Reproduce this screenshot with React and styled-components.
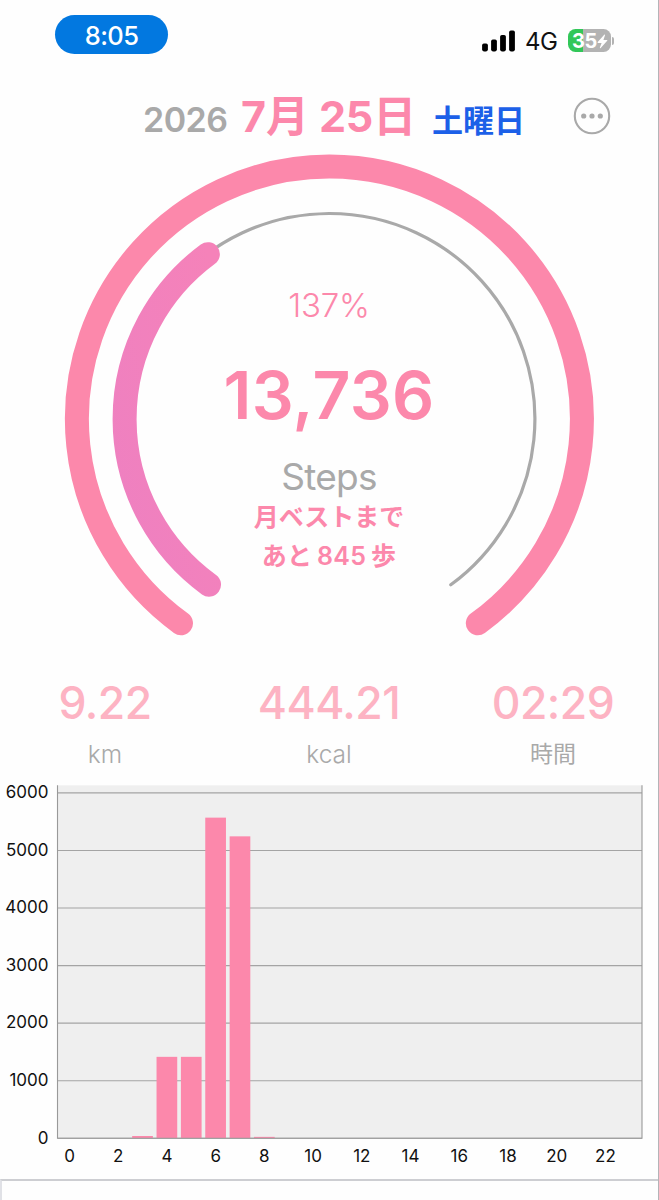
import React from "react";
import styled, { createGlobalStyle } from "styled-components";

const PINK = "#fc88ab";
const GRAY = "#a9a9a9";

const GlobalStyle = createGlobalStyle`
  * { box-sizing: border-box; }
  body { margin: 0; background: #fefefe; }
`;

const Screen = styled.div`
  width: 659px;
  height: 1200px;
  overflow: hidden;
  display: flex;
  flex-direction: column;
  background: #fefefe;
  border-right: 1px solid #b4b4b8;
  font-family: Inter, "Noto Sans CJK JP", sans-serif;
  font-feature-settings: "calt" 0;
`;

const StatusBar = styled.div`
  height: 54px;
  flex: none;
  display: flex;
  justify-content: space-between;
  align-items: flex-end;
  padding: 0 44px 0 55px;
`;

const TimePill = styled.div`
  width: 113px;
  height: 39px;
  border-radius: 20px;
  background: #0278e0;
  color: #fff;
  font-size: 25.5px;
  font-weight: 500;
  letter-spacing: -0.6px;
  line-height: 41px;
  text-align: center;
`;

const StatusIcons = styled.div`
  display: flex;
  align-items: center;
  height: 27px;
`;

const Network = styled.span`
  width: 33px;
  margin: 0 10px 0 9px;
  font-size: 24px;
  letter-spacing: -0.5px;
  line-height: 29px;
  padding-top: 1px;
  color: #111;
  white-space: nowrap;
`;

const Battery = styled.div`
  display: flex;
  align-items: center;
`;

const BatteryBody = styled.div`
  width: 43px;
  height: 23px;
  border-radius: 7.5px;
  background: linear-gradient(to right, #32c759 35%, #b3b3b3 35%);
  color: #fff;
  display: flex;
  align-items: center;
  padding-left: 4px;
  font-size: 20px;
  font-weight: 700;
  letter-spacing: -0.5px;
  line-height: 25px;
  padding-top: 1px;
`;

const BatteryTip = styled.div`
  width: 2px;
  height: 8px;
  margin-left: 1px;
  border-radius: 0 3px 3px 0;
  background: #b3b3b3;
`;

const Header = styled.header`
  height: 90px;
  flex: none;
  display: flex;
  align-items: baseline;
  padding: 35px 0 0 143px;
  font-weight: 700;
  white-space: nowrap;
`;

const Year = styled.span`
  width: 98px;
  font-size: 34px;
  font-weight: 600;
  letter-spacing: -0.5px;
  color: ${GRAY};
`;

const MonthDay = styled.span`
  width: 191px;
  font-size: 43px;
  letter-spacing: -0.1px;
  line-height: 54px;
  color: ${PINK};
`;

const Weekday = styled.span`
  width: 141px;
  font-size: 31px;
  color: #1c60e8;
`;

const MoreButton = styled.button`
  width: 38px;
  height: 38px;
  padding: 0;
  border: 0;
  background: none;
  align-self: flex-start;
  margin-top: 8px;
  svg { display: block; }
`;

const Gauge = styled.section`
  display: grid;
  height: 500px;
  flex: none;
  > * { grid-area: 1 / 1; }
`;

const GaugeText = styled.div`
  display: flex;
  flex-direction: column;
  align-items: center;
  padding-top: 138px;
  color: ${PINK};
  white-space: nowrap;
`;

const Percent = styled.div`
  font-size: 33px;
  font-weight: 300;
  letter-spacing: -0.2px;
  line-height: 46px;
`;

const StepCount = styled.div`
  margin-top: 22px;
  font-size: 66px;
  font-weight: 600;
  letter-spacing: 0.3px;
  line-height: 90px;
`;

const StepLabel = styled.div`
  margin-top: 12px;
  font-size: 37px;
  letter-spacing: -0.7px;
  line-height: 50px;
  color: ${GRAY};
`;

const BestLine = styled.div`
  font-size: 25px;
  font-weight: 600;
  line-height: 39px;
  margin-top: ${(p) => p.$offset || 0}px;
  word-spacing: -2px;
  letter-spacing: ${(p) => p.$spacing || 0}px;
`;

const Metrics = styled.section`
  display: grid;
  grid-template-columns: 210px 238px 210px;
  height: 141px;
  flex: none;
  padding-top: 33px;
`;

const Metric = styled.div`
  text-align: center;
`;

const MetricValue = styled.div`
  font-size: 44.5px;
  font-weight: 550;
  letter-spacing: -0.5px;
  line-height: 52px;
  color: #fdb3c3;
`;

const MetricUnit = styled.div`
  margin-top: 8px;
  font-size: ${(p) => p.$size || 24.5}px;
  font-weight: ${(p) => p.$weight || 350};
  line-height: 34px;
  color: ${GRAY};
`;

const ChartSvg = styled.svg`
  display: block;
  flex: none;
  overflow: visible;
  text { font-size: 17px; fill: #111; }
`;

const NextPanel = styled.div`
  flex: 1;
  border-top: 2px solid #cdced2;
  border-left: 2px solid #e0e1e6;
`;

const polar = (r, deg) => {
  const a = (deg * Math.PI) / 180;
  return [329.4 - r * Math.sin(a), 275 + r * Math.cos(a)];
};

const arc = (r, from, to) => {
  const [x1, y1] = polar(r, from);
  const [x2, y2] = polar(r, to);
  return `M${x1} ${y1}A${r} ${r} 0 ${to - from > 180 ? 1 : 0} 1 ${x2} ${y2}`;
};

const SIGNAL = [8, 12, 16.5, 21];
const HOURS = [0, 0, 0, 40, 1415, 1415, 5570, 5245, 25];
const hourX = (h) => 69.5 + h * 24.36;
const stepY = (v) => 353.3 - v * 0.05757;

function Chart() {
  return (
    <ChartSvg width="658" height="394" viewBox="0 0 658 394">
      <rect x="57.5" y="0.3" width="584.5" height="353" fill="#efefef" />
      {[0, 1000, 2000, 3000, 4000, 5000, 6000].map((v) => (
        <g key={v}>
          <path d={`M57.5 ${stepY(v)}H642`} stroke="#a4a4a4" strokeWidth="1.1" />
          <text x="48.5" y={stepY(v) + 5.2} textAnchor="end">{v}</text>
        </g>
      ))}
      {HOURS.map((v, h) =>
        v ? <rect key={h} x={hourX(h) - 10.4} y={stepY(v)} width="20.7" height={353 - stepY(v)} fill={PINK} /> : null
      )}
      <path d="M57.5 0.3V353.3H642V0.3" fill="none" stroke="#999" strokeWidth="1.1" />
      {[0, 2, 4, 6, 8, 10, 12, 14, 16, 18, 20, 22].map((h) => (
        <text key={h} x={hourX(h)} y="377" textAnchor="middle">{h}</text>
      ))}
    </ChartSvg>
  );
}

export default function App() {
  return (
    <Screen>
      <GlobalStyle />
      <StatusBar>
        <TimePill>8:05</TimePill>
        <StatusIcons>
          <svg width="34" height="22" viewBox="0 0 34 22" fill="#000">
            {SIGNAL.map((h, i) => (
              <rect key={h} x={0.1 + i * 9} y={21.4 - h} width="5.8" height={h} rx="1.8" />
            ))}
          </svg>
          <Network>4G</Network>
          <Battery>
            <BatteryBody>
              35
              <svg width="11" height="15" viewBox="0 0 11 15" fill="#fff">
                <path d="M7.2.8.7 8.100c-.3.4-.1.8.3.8h3.600L2.900 13.600c-.2.6.4.9.8.4l6.500-7.200c.4-.4.1-.8-.3-.8H6.400L8 1.300C8.200.7 7.600.4 7.200.8z" />
              </svg>
            </BatteryBody>
            <BatteryTip />
          </Battery>
        </StatusIcons>
      </StatusBar>

      <Header>
        <Year>2026</Year>
        <MonthDay>7月 25日</MonthDay>
        <Weekday>土曜日</Weekday>
        <MoreButton aria-label="More">
          <svg width="38" height="38" viewBox="0 0 38 38" fill={GRAY}>
            <circle cx="19" cy="19" r="17.2" fill="none" stroke={GRAY} strokeWidth="2.1" />
            <circle cx="10.7" cy="19" r="2.6" />
            <circle cx="19" cy="19" r="2.6" />
            <circle cx="27.3" cy="19" r="2.6" />
          </svg>
        </MoreButton>
      </Header>

      <Gauge>
        <svg width="658" height="500" viewBox="0 0 658 500" fill="none">
          <defs>
            <linearGradient id="progress" x1="0" y1="1" x2="1" y2="0">
              <stop offset="0" stopColor="#ee80c1" />
              <stop offset="1" stopColor="#f582b9" />
            </linearGradient>
          </defs>
          <path d={arc(252.5, 36, 324)} stroke={PINK} strokeWidth="24" strokeLinecap="round" />
          <path d={arc(205.5, 36, 323.8)} stroke={GRAY} strokeWidth="3.2" strokeLinecap="round" />
          <path d={arc(204.8, 36, 143.6)} stroke="url(#progress)" strokeWidth="24" strokeLinecap="round" />
        </svg>
        <GaugeText>
          <Percent>137%</Percent>
          <StepCount>13,736</StepCount>
          <StepLabel>Steps</StepLabel>
          <BestLine $offset={-4}>月ベストまで</BestLine>
          <BestLine $spacing={0.3}>あと 845 歩</BestLine>
        </GaugeText>
      </Gauge>

      <Metrics>
        <Metric>
          <MetricValue>9.22</MetricValue>
          <MetricUnit>km</MetricUnit>
        </Metric>
        <Metric>
          <MetricValue>444.21</MetricValue>
          <MetricUnit>kcal</MetricUnit>
        </Metric>
        <Metric>
          <MetricValue>02:29</MetricValue>
          <MetricUnit $size={23} $weight={400}>時間</MetricUnit>
        </Metric>
      </Metrics>

      <Chart />
      <NextPanel />
    </Screen>
  );
}
